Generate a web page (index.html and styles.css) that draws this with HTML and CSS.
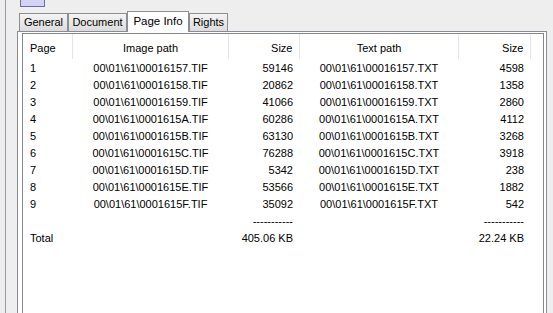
FILE: index.html
```html
<!DOCTYPE html>
<html>

<head>
    <link rel="stylesheet" href="styles.css">
</head>

<body>
    <div class="frame">
        <div class="top_button"></div>
        <div class="tabs">
            <div class="tab tab_general">General</div>
            <div class="tab tab_document">Document</div>
            <div class="tab tab_pageinfo selected">Page Info</div>
            <div class="tab tab_rights">Rights</div>
        </div>
        <div class="panel">
            <div class="list">
                <table class="pages">
                    <colgroup>
                        <col class="col_page">
                        <col class="col_image">
                        <col class="col_isize">
                        <col class="col_text">
                        <col class="col_tsize">
                        <col>
                    </colgroup>
                    <thead>
                        <tr>
                            <th class="left">Page</th>
                            <th>Image path</th>
                            <th class="right">Size</th>
                            <th>Text path</th>
                            <th class="right">Size</th>
                            <th class="last"></th>
                        </tr>
                    </thead>
                    <tbody>
                        <tr>
                            <td>1</td><td class="center">00\01\61\00016157.TIF</td><td class="right">59146</td><td class="center">00\01\61\00016157.TXT</td><td class="right">4598</td><td></td>
                        </tr>
                        <tr>
                            <td>2</td><td class="center">00\01\61\00016158.TIF</td><td class="right">20862</td><td class="center">00\01\61\00016158.TXT</td><td class="right">1358</td><td></td>
                        </tr>
                        <tr>
                            <td>3</td><td class="center">00\01\61\00016159.TIF</td><td class="right">41066</td><td class="center">00\01\61\00016159.TXT</td><td class="right">2860</td><td></td>
                        </tr>
                        <tr>
                            <td>4</td><td class="center">00\01\61\0001615A.TIF</td><td class="right">60286</td><td class="center">00\01\61\0001615A.TXT</td><td class="right">4112</td><td></td>
                        </tr>
                        <tr>
                            <td>5</td><td class="center">00\01\61\0001615B.TIF</td><td class="right">63130</td><td class="center">00\01\61\0001615B.TXT</td><td class="right">3268</td><td></td>
                        </tr>
                        <tr>
                            <td>6</td><td class="center">00\01\61\0001615C.TIF</td><td class="right">76288</td><td class="center">00\01\61\0001615C.TXT</td><td class="right">3918</td><td></td>
                        </tr>
                        <tr>
                            <td>7</td><td class="center">00\01\61\0001615D.TIF</td><td class="right">5342</td><td class="center">00\01\61\0001615D.TXT</td><td class="right">238</td><td></td>
                        </tr>
                        <tr>
                            <td>8</td><td class="center">00\01\61\0001615E.TIF</td><td class="right">53566</td><td class="center">00\01\61\0001615E.TXT</td><td class="right">1882</td><td></td>
                        </tr>
                        <tr>
                            <td>9</td><td class="center">00\01\61\0001615F.TIF</td><td class="right">35092</td><td class="center">00\01\61\0001615F.TXT</td><td class="right">542</td><td></td>
                        </tr>
                        <tr>
                            <td></td><td></td><td class="right">-----------</td><td></td><td class="right">-----------</td><td></td>
                        </tr>
                        <tr>
                            <td>Total</td><td></td><td class="right">405.06 KB</td><td></td><td class="right">22.24 KB</td><td></td>
                        </tr>
                    </tbody>
                </table>
            </div>
        </div>
    </div>
</body>

</html>
```

FILE: styles.css
```css
/* Window background */

body {
    margin: 0;
    height: 313px;
    background-color: #efeeee;
    font-family: 'Liberation Sans', Arial, sans-serif;
    font-size: 11px;
    color: #000000;
    overflow: hidden;
}

.frame {
    display: flex;
    flex-direction: column;
    margin-left: 5px;
    width: 530px;
    height: 313px;
    padding: 0 14px 0 11px;
    border-left: 1px solid #9a9aa6;
    border-right: 1px solid #9a9aa6;
}

/* Bottom of the button above the tabs */

.top_button {
    margin-left: 3px;
    width: 23px;
    height: 6px;
    background-color: #d2d2f4;
    border: 1px solid #6e6e96;
    border-top: none;
}

/* Tab strip */

.tabs {
    display: flex;
    align-items: flex-end;
    height: 24px;
    padding-left: 2px;
}

.tab {
    box-sizing: border-box;
    height: 18px;
    padding-top: 2px;
    text-align: center;
    border: 1px solid #8c8e94;
    border-bottom: none;
    background: linear-gradient(#f4f4f4, #dcdcdc);
}

.tab_general {
    width: 49px;
}

.tab_document {
    width: 59px;
}

.tab_pageinfo {
    width: 62px;
}

.tab_rights {
    width: 39px;
}

.tab.selected {
    position: relative;
    height: 21px;
    margin-bottom: -1px;
    padding-top: 3px;
    background: #ffffff;
    font-size: 11.5px;
}

/* Tab page, runs on past the bottom of the window */

.panel {
    flex: 1;
    display: flex;
    flex-direction: column;
    background-color: #ffffff;
    border: 1px solid #898c95;
    border-bottom: none;
    padding: 1px 2px 0 4px;
}

.list {
    flex: 1;
    border: 1px solid #828790;
    border-bottom: none;
    background-color: #ffffff;
}

.pages {
    table-layout: fixed;
    border-collapse: collapse;
    width: 509px;
}

.col_page {
    width: 49px;
}

.col_image {
    width: 156px;
}

.col_isize {
    width: 71px;
}

.col_text {
    width: 159px;
}

.col_tsize {
    width: 72px;
}

.pages th {
    height: 25px;
    padding: 2px 6px 0 7px;
    box-sizing: border-box;
    font-weight: normal;
    text-align: center;
    border-right: 1px solid #e6e6ea;
    white-space: nowrap;
}

.pages th.last {
    border-right: none;
}

.pages td {
    height: 17px;
    padding: 0 6px 0 7px;
    white-space: nowrap;
}

.left {
    text-align: left !important;
}

.right {
    text-align: right !important;
}

.center {
    text-align: center;
}
```
